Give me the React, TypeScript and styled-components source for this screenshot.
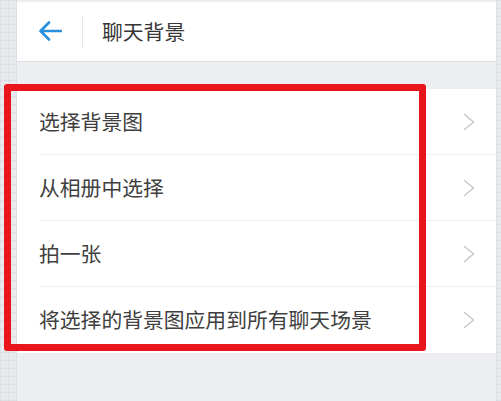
import React from "react";
import styled, { createGlobalStyle } from "styled-components";

const GlobalStyle = createGlobalStyle`
  html, body {
    margin: 0;
    padding: 0;
  }
  body {
    width: 501px;
    height: 401px;
    overflow: hidden;
    background-color: #e8eaed;
    background-image:
      repeating-linear-gradient(0deg, rgba(200, 204, 210, 0.35) 0 1px, transparent 1px 8px),
      repeating-linear-gradient(90deg, rgba(200, 204, 210, 0.35) 0 1px, transparent 1px 8px);
    font-family: "Noto Sans CJK SC", "Noto Sans", sans-serif;
  }
`;

const Page = styled.div`
  position: relative;
  width: 501px;
  height: 401px;
  display: flex;
`;

const Column = styled.div`
  margin-left: 17px;
  width: 479px;
  height: 401px;
  background: #eceef1;
  display: flex;
  flex-direction: column;
`;

const Header = styled.div`
  height: 59px;
  margin-top: 2px;
  background: #ffffff;
  border-bottom: 1px solid #dcdee2;
  display: flex;
  align-items: center;
  padding-left: 21px;
`;

const BackButton = styled.div`
  width: 24px;
  height: 24px;
  display: flex;
  align-items: center;
  justify-content: center;
  margin-top: -2px;
`;

const Divider = styled.div`
  width: 1px;
  height: 32px;
  background: #e6e7ea;
  margin-left: 20px;
  margin-right: 19px;
`;

const Title = styled.div`
  font-size: 20.8px;
  color: #363636;
  line-height: 1;
  margin-top: -1px;
`;

const List = styled.div`
  margin-top: 27px;
  background: #ffffff;
  display: flex;
  flex-direction: column;
`;

const Row = styled.div<{ $last?: boolean }>`
  height: 66px;
  display: flex;
  align-items: center;
  margin-left: 22px;
  padding-right: 21px;
  border-bottom: ${(p) => (p.$last ? "none" : "1px solid #eeeff1")};
  box-sizing: border-box;
`;

const RowText = styled.div`
  flex: 1;
  font-size: 20.8px;
  color: #404040;
  line-height: 1;
  margin-top: -1px;
`;

const Highlight = styled.div`
  position: absolute;
  left: 4px;
  top: 84px;
  width: 422px;
  height: 267px;
  box-sizing: border-box;
  border: 7px solid #e8151b;
  border-radius: 3px;
  pointer-events: none;
`;

const Chevron = () => (
  <svg width="12" height="18" viewBox="0 0 12 18" fill="none">
    <path d="M1.5 1.5 L10.5 9 L1.5 16.5" stroke="#c6c7ca" strokeWidth="1.5" strokeLinecap="round" strokeLinejoin="round" />
  </svg>
);

const BackArrow = () => (
  <svg width="24" height="22" viewBox="0 0 24 22" fill="none">
    <path d="M23 11 H2.5 M11 2.5 L2.5 11 L11 19.5" stroke="#2a8fdc" strokeWidth="2.6" strokeLinecap="round" strokeLinejoin="round" />
  </svg>
);

const items = ["选择背景图", "从相册中选择", "拍一张", "将选择的背景图应用到所有聊天场景"];

export default function App() {
  return (
    <>
      <GlobalStyle />
      <Page>
        <Column>
          <Header>
            <BackButton>
              <BackArrow />
            </BackButton>
            <Divider />
            <Title>聊天背景</Title>
          </Header>
          <List>
            {items.map((t, i) => (
              <Row key={t} $last={i === items.length - 1}>
                <RowText>{t}</RowText>
                <Chevron />
              </Row>
            ))}
          </List>
        </Column>
        <Highlight />
      </Page>
    </>
  );
}
